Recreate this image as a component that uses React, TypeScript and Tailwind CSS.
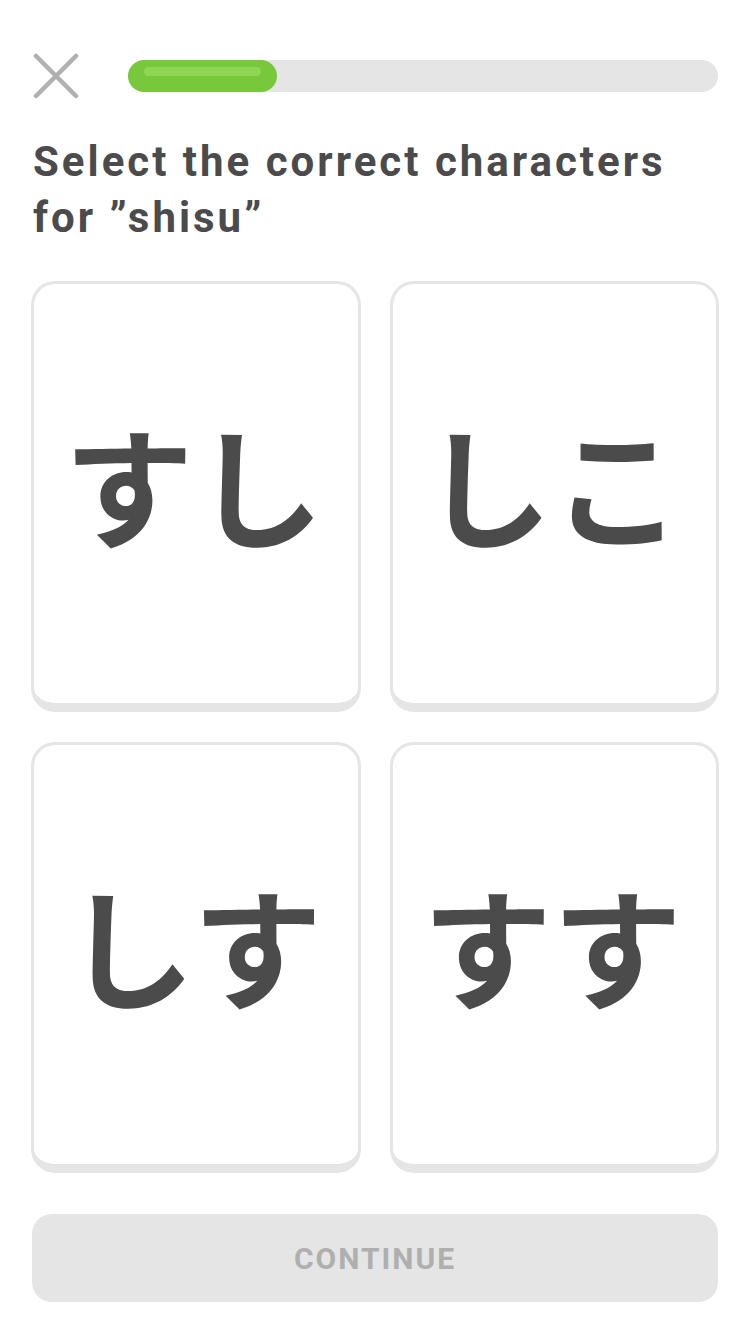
import React from "react";

const cards = ["すし", "しこ", "しす", "すす"];

export default function App() {
  return (
    <div className="w-[750px] h-[1334px] bg-white flex flex-col px-[31px]" style={{ fontFamily: "Roboto, 'Noto Sans', sans-serif" }}>
      <div className="mt-[53px] h-[46px] flex items-center">
        <svg className="ml-[2px] shrink-0" width="46" height="46" viewBox="0 0 46 46">
          <path d="M3 3 L43 43 M43 3 L3 43" stroke="#afafaf" strokeWidth="4.5" strokeLinecap="round" />
        </svg>
        <div className="ml-[49px] mr-[1px] flex-1 h-[32px] rounded-full bg-[#e5e5e5] relative">
          <div className="w-[149px] h-full rounded-full bg-[#78c83c] px-[16px] pt-[7px]">
            <div className="h-[9px] rounded-full bg-[#8fd655]" />
          </div>
        </div>
      </div>
      <h1 className="mt-[35px] ml-[2px] text-[#4b4b4b] text-[42px] leading-[56px] font-bold tracking-[3px]">
        Select the correct characters for ”shisu”
      </h1>
      <div className="mt-[35px] grid grid-cols-2 gap-x-[29px] gap-y-[30px]">
        {cards.map((c) => (
          <div
            key={c}
            className="h-[431px] rounded-[24px] border-[3px] border-b-[9px] border-[#e5e5e5] bg-white flex items-center justify-center pb-[26px] pr-[4px]"
          >
            <span
              className="text-[#4b4b4b] text-[130px] leading-none font-bold"
              style={{ fontFamily: "'Noto Sans CJK JP', sans-serif" }}
            >
              {c}
            </span>
          </div>
        ))}
      </div>
      <div className="mt-[41px] ml-[1px] mr-[1px] h-[88px] rounded-[20px] bg-[#e5e5e5] flex items-center justify-center">
        <span className="text-[#afafaf] text-[30px] font-bold tracking-[2px]">CONTINUE</span>
      </div>
    </div>
  );
}
